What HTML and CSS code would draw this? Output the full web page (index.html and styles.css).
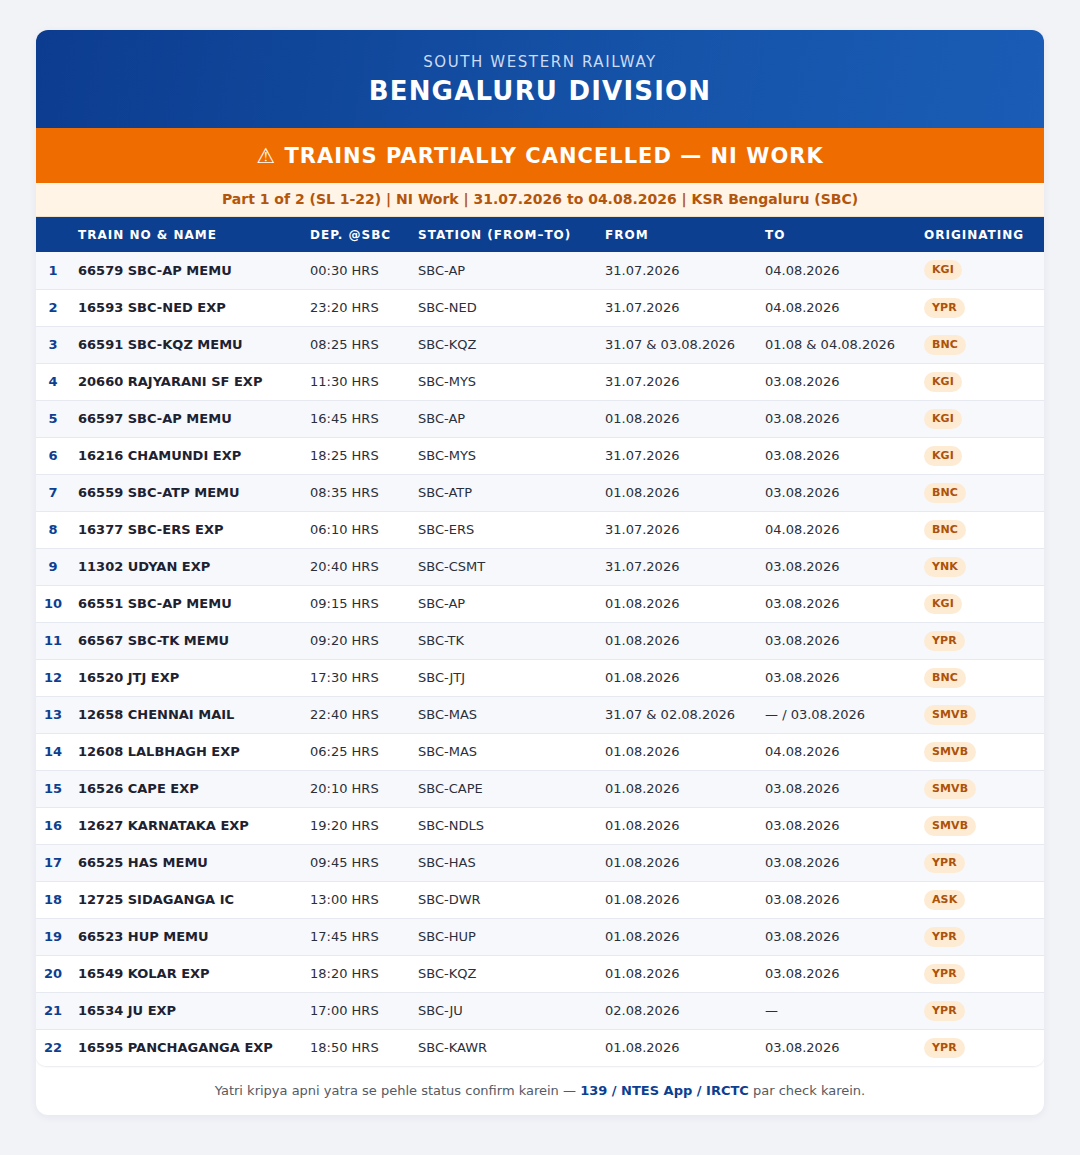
FILE: index.html
```html
<!DOCTYPE html>
<html lang="en">
<head>
<meta charset="utf-8">
<title>Bengaluru Division - Trains Partially Cancelled</title>
<link rel="stylesheet" href="styles.css">
</head>
<body>
<div class="card">
  <header class="head">
    <div class="head-sub">SOUTH WESTERN RAILWAY</div>
    <div class="head-title">BENGALURU DIVISION</div>
  </header>
  <div class="alert">⚠ TRAINS PARTIALLY CANCELLED — NI WORK</div>
  <div class="info">Part 1 of 2 (SL 1-22) | NI Work | 31.07.2026 to 04.08.2026 | KSR Bengaluru (SBC)</div>
  <div class="table-wrap">
  <table class="trains">
    <colgroup>
      <col class="c-sl"><col class="c-name"><col class="c-dep"><col class="c-stn"><col class="c-from"><col class="c-to"><col class="c-orig">
    </colgroup>
    <thead>
      <tr><th></th><th>TRAIN NO &amp; NAME</th><th>DEP. @SBC</th><th>STATION (FROM–TO)</th><th>FROM</th><th>TO</th><th>ORIGINATING</th></tr>
    </thead>
    <tbody>
      <tr><td class="sl">1</td><td class="name">66579 SBC-AP MEMU</td><td>00:30 HRS</td><td>SBC-AP</td><td>31.07.2026</td><td>04.08.2026</td><td><span class="badge">KGI</span></td></tr>
      <tr><td class="sl">2</td><td class="name">16593 SBC-NED EXP</td><td>23:20 HRS</td><td>SBC-NED</td><td>31.07.2026</td><td>04.08.2026</td><td><span class="badge">YPR</span></td></tr>
      <tr><td class="sl">3</td><td class="name">66591 SBC-KQZ MEMU</td><td>08:25 HRS</td><td>SBC-KQZ</td><td>31.07 &amp; 03.08.2026</td><td>01.08 &amp; 04.08.2026</td><td><span class="badge">BNC</span></td></tr>
      <tr><td class="sl">4</td><td class="name">20660 RAJYARANI SF EXP</td><td>11:30 HRS</td><td>SBC-MYS</td><td>31.07.2026</td><td>03.08.2026</td><td><span class="badge">KGI</span></td></tr>
      <tr><td class="sl">5</td><td class="name">66597 SBC-AP MEMU</td><td>16:45 HRS</td><td>SBC-AP</td><td>01.08.2026</td><td>03.08.2026</td><td><span class="badge">KGI</span></td></tr>
      <tr><td class="sl">6</td><td class="name">16216 CHAMUNDI EXP</td><td>18:25 HRS</td><td>SBC-MYS</td><td>31.07.2026</td><td>03.08.2026</td><td><span class="badge">KGI</span></td></tr>
      <tr><td class="sl">7</td><td class="name">66559 SBC-ATP MEMU</td><td>08:35 HRS</td><td>SBC-ATP</td><td>01.08.2026</td><td>03.08.2026</td><td><span class="badge">BNC</span></td></tr>
      <tr><td class="sl">8</td><td class="name">16377 SBC-ERS EXP</td><td>06:10 HRS</td><td>SBC-ERS</td><td>31.07.2026</td><td>04.08.2026</td><td><span class="badge">BNC</span></td></tr>
      <tr><td class="sl">9</td><td class="name">11302 UDYAN EXP</td><td>20:40 HRS</td><td>SBC-CSMT</td><td>31.07.2026</td><td>03.08.2026</td><td><span class="badge">YNK</span></td></tr>
      <tr><td class="sl">10</td><td class="name">66551 SBC-AP MEMU</td><td>09:15 HRS</td><td>SBC-AP</td><td>01.08.2026</td><td>03.08.2026</td><td><span class="badge">KGI</span></td></tr>
      <tr><td class="sl">11</td><td class="name">66567 SBC-TK MEMU</td><td>09:20 HRS</td><td>SBC-TK</td><td>01.08.2026</td><td>03.08.2026</td><td><span class="badge">YPR</span></td></tr>
      <tr><td class="sl">12</td><td class="name">16520 JTJ EXP</td><td>17:30 HRS</td><td>SBC-JTJ</td><td>01.08.2026</td><td>03.08.2026</td><td><span class="badge">BNC</span></td></tr>
      <tr><td class="sl">13</td><td class="name">12658 CHENNAI MAIL</td><td>22:40 HRS</td><td>SBC-MAS</td><td>31.07 &amp; 02.08.2026</td><td>— / 03.08.2026</td><td><span class="badge">SMVB</span></td></tr>
      <tr><td class="sl">14</td><td class="name">12608 LALBHAGH EXP</td><td>06:25 HRS</td><td>SBC-MAS</td><td>01.08.2026</td><td>04.08.2026</td><td><span class="badge">SMVB</span></td></tr>
      <tr><td class="sl">15</td><td class="name">16526 CAPE EXP</td><td>20:10 HRS</td><td>SBC-CAPE</td><td>01.08.2026</td><td>03.08.2026</td><td><span class="badge">SMVB</span></td></tr>
      <tr><td class="sl">16</td><td class="name">12627 KARNATAKA EXP</td><td>19:20 HRS</td><td>SBC-NDLS</td><td>01.08.2026</td><td>03.08.2026</td><td><span class="badge">SMVB</span></td></tr>
      <tr><td class="sl">17</td><td class="name">66525 HAS MEMU</td><td>09:45 HRS</td><td>SBC-HAS</td><td>01.08.2026</td><td>03.08.2026</td><td><span class="badge">YPR</span></td></tr>
      <tr><td class="sl">18</td><td class="name">12725 SIDAGANGA IC</td><td>13:00 HRS</td><td>SBC-DWR</td><td>01.08.2026</td><td>03.08.2026</td><td><span class="badge">ASK</span></td></tr>
      <tr><td class="sl">19</td><td class="name">66523 HUP MEMU</td><td>17:45 HRS</td><td>SBC-HUP</td><td>01.08.2026</td><td>03.08.2026</td><td><span class="badge">YPR</span></td></tr>
      <tr><td class="sl">20</td><td class="name">16549 KOLAR EXP</td><td>18:20 HRS</td><td>SBC-KQZ</td><td>01.08.2026</td><td>03.08.2026</td><td><span class="badge">YPR</span></td></tr>
      <tr><td class="sl">21</td><td class="name">16534 JU EXP</td><td>17:00 HRS</td><td>SBC-JU</td><td>02.08.2026</td><td>—</td><td><span class="badge">YPR</span></td></tr>
      <tr><td class="sl">22</td><td class="name">16595 PANCHAGANGA EXP</td><td>18:50 HRS</td><td>SBC-KAWR</td><td>01.08.2026</td><td>03.08.2026</td><td><span class="badge">YPR</span></td></tr>
    </tbody>
  </table>
  </div>
  <footer class="foot">Yatri kripya apni yatra se pehle status confirm karein — <strong>139 / NTES App / IRCTC</strong> par check karein.</footer>
</div>
</body>
</html>
```

FILE: styles.css
```css
* { box-sizing: border-box; }
html, body { margin: 0; padding: 0; }
body {
  background: #f1f3f7;
  font-family: "DejaVu Sans", "Liberation Sans", sans-serif;
  padding: 30px 36px 40px;
}
.card {
  width: 1008px;
  background: #ffffff;
  border-radius: 12px;
  overflow: hidden;
  box-shadow: 0 2px 8px rgba(20, 40, 80, 0.06);
}
.head {
  background: linear-gradient(100deg, #0c3c8f 0%, #1553a8 60%, #1a5cb6 100%);
  text-align: center;
  padding: 21px 20px 19px;
}
.head-sub {
  font-size: 15px;
  line-height: 22px;
  letter-spacing: 1.6px;
  color: #cddbf3;
}
.head-title {
  margin-top: 1px;
  font-size: 26px;
  line-height: 35px;
  font-weight: bold;
  letter-spacing: 1.2px;
  color: #ffffff;
}
.alert {
  background: #ef6c00;
  color: #ffffff;
  text-align: center;
  font-size: 21px;
  font-weight: bold;
  letter-spacing: 1px;
  height: 55px;
  padding-top: 2px;
  line-height: 53px;
}
.info {
  background: #fff4e6;
  color: #b3560c;
  text-align: center;
  font-size: 14px;
  font-weight: bold;
  height: 34px;
  line-height: 33px;
  border-bottom: 1px solid #f1e2cc;
}
.table-wrap {
  border-radius: 0 0 10px 10px;
  overflow: hidden;
  box-shadow: 0 1px 2px rgba(20, 40, 80, 0.10);
}
.trains {
  width: 1008px;
  table-layout: fixed;
  border-collapse: collapse;
}
.c-sl { width: 32px; }
.c-name { width: 232px; }
.c-dep { width: 108px; }
.c-stn { width: 187px; }
.c-from { width: 160px; }
.c-to { width: 159px; }
.c-orig { width: 130px; }
.trains th {
  background: #0d3f91;
  color: #ffffff;
  font-size: 12px;
  font-weight: bold;
  letter-spacing: 1px;
  text-align: left;
  height: 35px;
  padding: 0 10px;
  white-space: nowrap;
}
.trains td {
  height: 37px;
  padding: 0 10px;
  font-size: 13px;
  color: #2b2f3a;
  border-bottom: 1px solid #e6e9f0;
  white-space: nowrap;
}
.trains tbody tr:nth-child(odd) td { background: #f6f8fc; }
.trains tbody tr:nth-child(even) td { background: #ffffff; }
.trains tbody tr:last-child td { border-bottom: none; }
.trains td.sl {
  text-align: center;
  padding: 0 0 0 2px;
  font-weight: bold;
  color: #0d3f91;
}
.trains td.name {
  font-weight: bold;
  color: #1e2230;
}
.badge {
  display: inline-block;
  background: #fdebd4;
  color: #ad5208;
  font-size: 11px;
  font-weight: bold;
  line-height: 20px;
  padding: 0 8px;
  border-radius: 10px;
  letter-spacing: 0.1px;
}
.foot {
  text-align: center;
  font-size: 13px;
  color: #555a64;
  height: 49px;
  line-height: 50px;
}
.foot strong { color: #0d3f91; }
```
